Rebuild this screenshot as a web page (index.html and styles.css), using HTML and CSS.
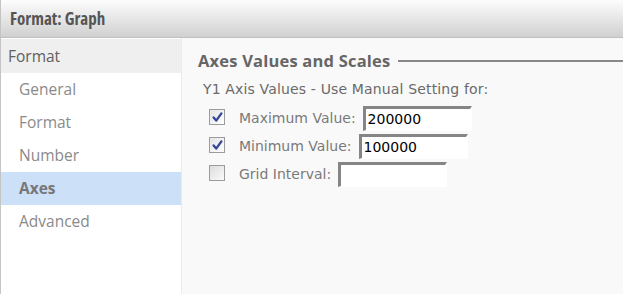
FILE: index.html
```html
<!DOCTYPE html>
<html>
<head>
<meta charset="utf-8">
<link rel="stylesheet" href="styles.css">
</head>
<body>
<div class="dialog">
  <div class="header">Format: Graph</div>
  <div class="main">
    <div class="sidebar">
      <div class="group">Format</div>
      <div class="item">General</div>
      <div class="item">Format</div>
      <div class="item">Number</div>
      <div class="item selected">Axes</div>
      <div class="item">Advanced</div>
    </div>
    <div class="content">
      <div class="section-title"><span class="title-text">Axes Values and Scales</span><span class="title-rule"></span></div>
      <div class="subtitle">Y1 Axis Values - Use Manual Setting for:</div>
      <div class="rows">
        <div class="row">
          <span class="check checked"><svg viewBox="0 0 13 13" width="13" height="13"><path d="M2.6 6.4 L5.2 9.6 L10.4 2.4" fill="none" stroke="#34469a" stroke-width="2.3" stroke-linecap="round" stroke-linejoin="round"/></svg></span>
          <span class="label">Maximum Value:</span>
          <span class="field">200000</span>
        </div>
        <div class="row">
          <span class="check checked"><svg viewBox="0 0 13 13" width="13" height="13"><path d="M2.6 6.4 L5.2 9.6 L10.4 2.4" fill="none" stroke="#34469a" stroke-width="2.3" stroke-linecap="round" stroke-linejoin="round"/></svg></span>
          <span class="label">Minimum Value:</span>
          <span class="field">100000</span>
        </div>
        <div class="row">
          <span class="check"></span>
          <span class="label">Grid Interval:</span>
          <span class="field"></span>
        </div>
      </div>
    </div>
  </div>
</div>
</body>
</html>
```
FILE: styles.css
```css
html, body {
  margin: 0;
  padding: 0;
  width: 623px;
  height: 294px;
  overflow: hidden;
  background: #ffffff;
}
.dialog {
  display: flex;
  flex-direction: column;
  height: 294px;
}
.header {
  flex: none;
  height: 38px;
  box-sizing: border-box;
  padding-left: 9px;
  border-left: 1px solid #c4c4c4;
  border-bottom: 1px solid #c0c0c0;
  background: linear-gradient(#fdfdfd, #d0d0d0);
  font-family: "Open Sans", sans-serif;
  font-stretch: 83%;
  font-weight: 700;
  font-size: 17px;
  line-height: 37px;
  color: #555555;
}
.main {
  flex: 1;
  display: flex;
  border-left: 1px solid #c4c4c4;
}
.sidebar {
  width: 180px;
  flex: none;
  background: #ffffff;
  border-right: 1px solid #ebebeb;
  padding-top: 1px;
  font-family: "Open Sans", sans-serif;
  font-size: 15.5px;
}
.group {
  height: 34px;
  line-height: 34px;
  background: #efefef;
  padding-left: 7px;
  color: #606060;
}
.item {
  height: 33px;
  line-height: 33px;
  padding-left: 18px;
  color: #8a8a8a;
}
.item.selected {
  background: #cce0f7;
  font-weight: 700;
  color: #777777;
}
.content {
  flex: 1;
  background: #f9f9f9;
  padding-left: 16px;
  padding-top: 12px;
}
.section-title {
  display: flex;
  align-items: center;
  height: 20px;
}
.title-text {
  font-family: "Open Sans", sans-serif;
  font-weight: 700;
  font-size: 16.5px;
  letter-spacing: 0.2px;
  color: #666666;
  white-space: nowrap;
}
.title-rule {
  flex: 1;
  height: 2px;
  background: #888888;
  margin-left: 8px;
  margin-top: 2px;
}
.subtitle {
  margin-top: 9px;
  padding-left: 5px;
  height: 20px;
  line-height: 20px;
  font-family: "DejaVu Sans", Verdana, sans-serif;
  font-size: 14px;
  letter-spacing: 0.15px;
  color: #6a6a6a;
}
.rows {
  margin-top: 7px;
  display: flex;
  flex-direction: column;
  gap: 2px;
  padding-left: 11px;
}
.row {
  display: flex;
  align-items: flex-start;
  height: 26px;
}
.check {
  width: 14px;
  height: 14px;
  margin-top: 3px;
  border: 1px solid #9c9c9c;
  background: linear-gradient(135deg, #dcdcdc, #fbfbfb);
  display: flex;
  align-items: center;
  justify-content: center;
  flex: none;
}
.check.checked {
  background: linear-gradient(135deg, #e4e4e4, #ffffff);
}
.label {
  margin-left: 14px;
  margin-top: 3px;
  line-height: 18px;
  font-family: "DejaVu Sans", Verdana, sans-serif;
  font-size: 14px;
  color: #7a7a7a;
  white-space: nowrap;
}
.field {
  margin-left: 7px;
  width: 102px;
  height: 21px;
  border-style: solid;
  border-width: 3px 2px 1px 3px;
  border-color: #858585 #ffffff #ffffff #858585;
  background: #ffffff;
  padding-left: 2px;
  font-family: "DejaVu Sans", Verdana, sans-serif;
  font-size: 14px;
  line-height: 21px;
  color: #000000;
  flex: none;
}
```
